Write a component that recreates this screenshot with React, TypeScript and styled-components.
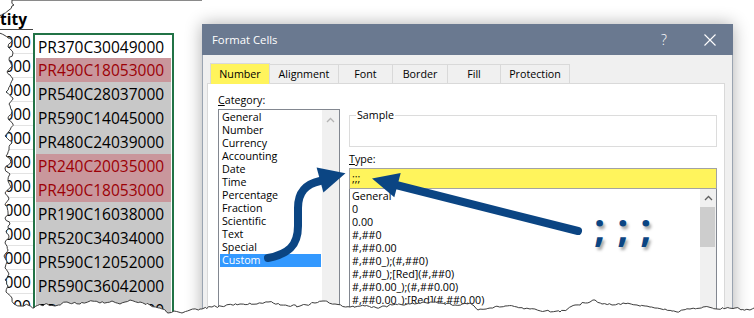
import React from "react";
import styled, { createGlobalStyle } from "styled-components";

const GlobalStyle = createGlobalStyle`
  html, body { margin: 0; padding: 0; background: #ffffff; }
  body { width: 754px; height: 318px; overflow: hidden; font-family: "Open Sans", "Noto Sans", sans-serif; }
  * { box-sizing: border-box; }
`;

const UI_FONT = `"Open Sans", "Noto Sans", sans-serif`;
const BLUE = "#0b4583";

const Page = styled.div`
  position: relative;
  width: 754px;
  height: 318px;
  overflow: hidden;
  display: flex;
  align-items: flex-start;
  background: #ffffff;
`;

/* ---------- spreadsheet ---------- */
const Sheet = styled.div`
  flex: none;
  width: 202px;
  height: 318px;
  display: flex;
  border-top: 1px solid #8a8a8a;
  font-family: ${UI_FONT};
  font-size: 15.5px;
  color: #000;
`;

const ColA = styled.div`
  width: 33px;
  display: flex;
  flex-direction: column;
`;

const HeaderCell = styled.div`
  height: 33px;
  display: flex;
  align-items: flex-end;
  border-bottom: 1px solid #444;
  font-weight: 700;
  line-height: 20px;
  overflow: hidden;
`;

const QtyCell = styled.div`
  height: 24px;
  flex: none;
  display: flex;
  justify-content: flex-end;
  align-items: center;
  padding-right: 2px;
  border-bottom: 1px solid #e3e3e3;
  overflow: hidden;
  white-space: nowrap;
`;

const ColB = styled.div`
  width: 141px;
  display: flex;
  flex-direction: column;
`;

const Spacer = styled.div`
  height: 32px;
  flex: none;
`;

const GreenBox = styled.div`
  flex: 1;
  border: 2px solid #217346;
  border-bottom: none;
  padding: 0 1px;
  display: flex;
  flex-direction: column;
`;

type Fill = "white" | "pink" | "gray";
const FILLS: Record<Fill, string> = { white: "#ffffff", pink: "#c9979c", gray: "#c8c8c8" };

const CodeCell = styled.div<{ $fill: Fill; $first?: boolean }>`
  height: ${(p) => (p.$first ? 23 : 24)}px;
  flex: none;
  display: flex;
  align-items: center;
  padding-left: 2px;
  background: ${(p) => FILLS[p.$fill]};
  color: ${(p) => (p.$fill === "pink" ? "#9c0006" : "#000")};
  white-space: nowrap;
  overflow: hidden;
`;

/* ---------- dialog ---------- */
const Dialog = styled.div`
  flex: none;
  width: 531px;
  height: 300px;
  margin-top: 24px;
  background: #f0f0f0;
  border: 1px solid #9aa4b1;
  border-top: none;
  box-shadow: 0 0 16px rgba(0, 0, 0, 0.32);
  display: flex;
  flex-direction: column;
  font-family: ${UI_FONT};
  font-size: 10.7px;
  color: #000;
`;

const TitleBar = styled.div`
  height: 31px;
  flex: none;
  margin: 0 -1px;
  display: flex;
  align-items: center;
  background: #6a7990;
  color: #fff;
  padding-left: 10px;
`;

const Title = styled.div`
  flex: 1;
  font-size: 11.3px;
`;

const TitleButton = styled.div`
  width: 46px;
  height: 31px;
  display: flex;
  align-items: center;
  justify-content: center;
  font-size: 14px;
  font-weight: 300;
`;

const TabRow = styled.div`
  flex: none;
  height: 21px;
  margin: 8px 0 0 7px;
  display: flex;
  align-items: flex-end;
`;

const Tab = styled.div<{ $w: number; $active?: boolean }>`
  width: ${(p) => p.$w}px;
  height: ${(p) => (p.$active ? 21 : 19)}px;
  margin-bottom: ${(p) => (p.$active ? 0 : 1)}px;
  margin-left: -1px;
  &:first-child { margin-left: 0; }
  border: 1px solid #d9d9d9;
  border-bottom: none;
  background: ${(p) => (p.$active ? "#fff45c" : "#f0f0f0")};
  display: flex;
  align-items: center;
  justify-content: center;
  position: relative;
  z-index: ${(p) => (p.$active ? 2 : 0)};
`;

const Panel = styled.div`
  flex: 1;
  margin: -1px 0 0 4px;
  width: 518px;
  background: #fff;
  border: 1px solid #d9d9d9;
  display: flex;
  padding: 10px 7px 0 10px;
  overflow: hidden;
`;

const LeftCol = styled.div`
  width: 122px;
  flex: none;
  display: flex;
  flex-direction: column;
`;

const RightCol = styled.div`
  width: 368px;
  flex: none;
  margin-left: 9px;
  display: flex;
  flex-direction: column;
`;

const FieldLabel = styled.div<{ $mt?: number }>`
  height: 13px;
  line-height: 13px;
  margin-top: ${(p) => p.$mt ?? 0}px;
  margin-bottom: 2px;
`;

const ListBox = styled.div<{ $h: number; $noTop?: boolean }>`
  height: ${(p) => p.$h}px;
  flex: none;
  border: 1px solid #828790;
  border-top: ${(p) => (p.$noTop ? "none" : "1px solid #828790")};
  display: flex;
`;

const ListItems = styled.div`
  flex: 1;
  padding: 1px 1px 0 1px;
  display: flex;
  flex-direction: column;
`;

const ListItem = styled.div<{ $selected?: boolean }>`
  height: 13px;
  line-height: 13px;
  padding-left: 2px;
  white-space: nowrap;
  background: ${(p) => (p.$selected ? "#3399ff" : "transparent")};
  color: ${(p) => (p.$selected ? "#fff" : "#000")};
`;

const TypeItems = styled(ListItems)`
  padding-left: 0;
`;

const Scrollbar = styled.div<{ $w: number }>`
  width: ${(p) => p.$w}px;
  flex: none;
  background: #f0f0f0;
  display: flex;
  flex-direction: column;
`;

const ScrollButton = styled.div<{ $h: number }>`
  height: ${(p) => p.$h}px;
  display: flex;
  align-items: center;
  justify-content: center;
`;

const Thumb = styled.div<{ $h: number }>`
  height: ${(p) => p.$h}px;
  margin: 0 1px 0 0;
  background: #cdcdcd;
`;

const GroupBox = styled.div`
  margin-top: 21px;
  height: 32px;
  flex: none;
  border: 1px solid #dcdcdc;
  position: relative;
`;

const Legend = styled.span`
  position: absolute;
  top: -7px;
  left: 6px;
  padding: 0 1px;
  background: #fff;
  line-height: 13px;
`;

const TypeInput = styled.div`
  height: 21px;
  flex: none;
  border: 1px solid #a3a3a3;
  background: #fff45c;
  padding-left: 2px;
  line-height: 19px;
`;

/* ---------- overlays ---------- */
const Overlay = styled.svg`
  position: absolute;
  left: 0;
  top: 0;
  width: 754px;
  height: 318px;
  pointer-events: none;
  z-index: 5;
`;

const Semis = styled.div`
  position: absolute;
  left: 594px;
  top: 207px;
  display: flex;
  gap: 12px;
  font-family: ${UI_FONT};
  font-weight: 700;
  font-size: 39px;
  line-height: 39px;
  color: ${BLUE};
  text-shadow: 2px 3px 3px rgba(0, 0, 0, 0.35);
  z-index: 6;
`;

const Chevron = ({ color }: { color: string }) => (
  <svg width="9" height="6" viewBox="0 0 9 6">
    <path d="M1 5 L4.5 1.5 L8 5" fill="none" stroke={color} strokeWidth="1.3" />
  </svg>
);

const CloseIcon = () => (
  <svg width="12" height="12" viewBox="0 0 12 12">
    <path d="M0.5 0.5 L11.5 11.5 M11.5 0.5 L0.5 11.5" stroke="#fff" strokeWidth="1.1" />
  </svg>
);

/* ---------- data ---------- */
const rows: { qty: string; code: string; fill: Fill }[] = [
  { qty: "29000", code: "PR370C30049000", fill: "white" },
  { qty: "18000", code: "PR490C18053000", fill: "pink" },
  { qty: "37000", code: "PR540C28037000", fill: "gray" },
  { qty: "45000", code: "PR590C14045000", fill: "gray" },
  { qty: "39000", code: "PR480C24039000", fill: "gray" },
  { qty: "35000", code: "PR240C20035000", fill: "pink" },
  { qty: "53000", code: "PR490C18053000", fill: "pink" },
  { qty: "38000", code: "PR190C16038000", fill: "gray" },
  { qty: "34000", code: "PR520C34034000", fill: "gray" },
  { qty: "52000", code: "PR590C12052000", fill: "gray" },
  { qty: "42000", code: "PR590C36042000", fill: "gray" },
  { qty: "28000", code: "PR460C32800000", fill: "gray" },
];

const categories = [
  "General", "Number", "Currency", "Accounting", "Date", "Time",
  "Percentage", "Fraction", "Scientific", "Text", "Special", "Custom",
];

const types = [
  "General", "0", "0.00", "#,##0", "#,##0.00", "#,##0_);(#,##0)",
  "#,##0_);[Red](#,##0)", "#,##0.00_);(#,##0.00)", "#,##0.00_);[Red](#,##0.00)",
];

const tabs: { label: string; w: number }[] = [
  { label: "Number", w: 60 },
  { label: "Alignment", w: 70 },
  { label: "Font", w: 55 },
  { label: "Border", w: 56 },
  { label: "Fill", w: 54 },
  { label: "Protection", w: 70 },
];

/* ---------- torn edge ---------- */
type Pt = [number, number];
const leftKeys: Pt[] = [
  [12, 0], [14, 5], [9, 10], [3, 14], [-4, 17], [-4, 31], [4, 35], [12, 40], [8, 47], [13, 53], [9, 60],
  [12, 66], [7, 72], [13, 79], [10, 86], [6, 92], [13, 98], [9, 104], [12, 111], [8, 118], [13, 124],
  [10, 130], [5, 136], [12, 143], [9, 150], [6, 156], [11, 162], [5, 168], [10, 174], [8, 181],
  [11, 187], [5, 193], [9, 199], [5, 205], [8, 212], [5, 218], [10, 224], [6, 231], [9, 237], [5, 243],
  [8, 250], [4, 256], [7, 262], [5, 268], [9, 274], [5, 280], [8, 286], [6, 292], [12, 298], [14, 304],
];
const bottomKeys: Pt[] = [
  [20, 306], [28, 305], [34, 308], [45, 304], [55, 306], [67, 302], [80, 304], [92, 301], [100, 303],
  [112, 301], [120, 304], [130, 300], [140, 302], [150, 305], [160, 308], [168, 313], [174, 311],
  [182, 313], [190, 310], [200, 309], [212, 307], [225, 306], [240, 304], [257, 304], [268, 302],
  [280, 305], [300, 306], [315, 303], [323, 301], [335, 304], [350, 307], [365, 306], [377, 308],
  [392, 305], [410, 304], [423, 302], [440, 303], [455, 305], [470, 303], [478, 310], [490, 308],
  [505, 306], [517, 307], [530, 309], [545, 311], [560, 312], [575, 305], [590, 302], [595, 300],
  [602, 304], [612, 305], [623, 303], [637, 305], [650, 307], [665, 309], [677, 312], [690, 309],
  [703, 307], [717, 309], [735, 308], [750, 310], [754, 308],
];

function rng(seed: number) {
  let s = seed;
  return () => {
    s = (s * 16807) % 2147483647;
    return (s - 1) / 2147483646;
  };
}

function jag(points: Pt[], step: number, amp: number, seed: number): Pt[] {
  const r = rng(seed);
  const out: Pt[] = [];
  for (let i = 0; i < points.length - 1; i++) {
    const [x0, y0] = points[i];
    const [x1, y1] = points[i + 1];
    const n = Math.max(1, Math.round(Math.hypot(x1 - x0, y1 - y0) / step));
    for (let k = 0; k < n; k++) {
      const t = k / n;
      const jx = k === 0 ? 0 : (r() - 0.5) * amp;
      const jy = k === 0 ? 0 : (r() - 0.5) * amp;
      out.push([x0 + (x1 - x0) * t + jx, y0 + (y1 - y0) * t + jy]);
    }
  }
  out.push(points[points.length - 1]);
  return out;
}

const edge = jag([...leftKeys, ...bottomKeys], 2.6, 2.2, 7);
const edgeStr = edge.map(([x, y]) => `${x.toFixed(1)},${y.toFixed(1)}`).join(" ");
const maskPath = `M-6,0 L${edgeStr.split(" ").join(" L")} L754,318 L-6,318 Z`;

export default function App() {
  return (
    <>
      <GlobalStyle />
      <Page>
        <Sheet>
          <ColA>
            <HeaderCell>tity</HeaderCell>
            {rows.map((r, i) => (
              <QtyCell key={i}>{r.qty}</QtyCell>
            ))}
          </ColA>
          <ColB>
            <Spacer />
            <GreenBox>
              {rows.map((r, i) => (
                <CodeCell key={i} $fill={r.fill} $first={i === 0}>
                  {r.code}
                </CodeCell>
              ))}
            </GreenBox>
          </ColB>
        </Sheet>

        <Dialog>
          <TitleBar>
            <Title>Format Cells</Title>
            <TitleButton>?</TitleButton>
            <TitleButton>
              <CloseIcon />
            </TitleButton>
          </TitleBar>
          <TabRow>
            {tabs.map((t, i) => (
              <Tab key={t.label} $w={t.w} $active={i === 0}>
                {t.label}
              </Tab>
            ))}
          </TabRow>
          <Panel>
            <LeftCol>
              <FieldLabel>
                <u>C</u>ategory:
              </FieldLabel>
              <ListBox $h={220}>
                <ListItems>
                  {categories.map((c) => (
                    <ListItem key={c} $selected={c === "Custom"}>
                      {c}
                    </ListItem>
                  ))}
                </ListItems>
                <Scrollbar $w={17}>
                  <ScrollButton $h={19}>
                    <Chevron color="#b4b4b4" />
                  </ScrollButton>
                </Scrollbar>
              </ListBox>
            </LeftCol>
            <RightCol>
              <GroupBox>
                <Legend>Sample</Legend>
              </GroupBox>
              <FieldLabel $mt={6}>
                <u>T</u>ype:
              </FieldLabel>
              <TypeInput>;;;</TypeInput>
              <ListBox $h={140} $noTop>
                <TypeItems>
                  {types.map((t) => (
                    <ListItem key={t}>{t}</ListItem>
                  ))}
                </TypeItems>
                <Scrollbar $w={16}>
                  <ScrollButton $h={18}>
                    <Chevron color="#606060" />
                  </ScrollButton>
                  <Thumb $h={40} />
                </Scrollbar>
              </ListBox>
            </RightCol>
          </Panel>
        </Dialog>

        <Overlay viewBox="0 0 754 318">
          <path
            d="M268,258 C288,254 298,246 298,226 L298,208 C298,192 306,184 320,181"
            fill="none"
            stroke={BLUE}
            strokeWidth="8"
            strokeLinecap="round"
          />
          <polygon points="316.6,167.4 345.5,173.2 323.4,192.6" fill={BLUE} />
          <line x1="578" y1="231" x2="396" y2="185" stroke={BLUE} strokeWidth="8" strokeLinecap="round" />
          <polygon points="372,178.5 400.7,173.1 394.3,197.3" fill={BLUE} />
          <path d={maskPath} fill="#ffffff" />
          <polyline points={edgeStr} fill="none" stroke="#3c3c3c" strokeWidth="1" />
        </Overlay>
        <Semis>
          <span>;</span>
          <span>;</span>
          <span>;</span>
        </Semis>
      </Page>
    </>
  );
}
